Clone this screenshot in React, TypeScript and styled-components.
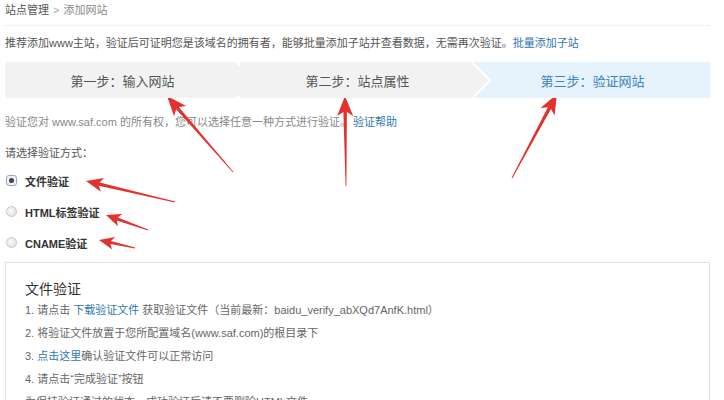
import styled, { createGlobalStyle } from 'styled-components';

const GlobalStyle = createGlobalStyle`
    html, body {
        margin: 0;
        padding: 0;
        background: #fff;
    }
    body {
        font-family: "Liberation Sans", "Noto Sans CJK SC", sans-serif;
        font-size: 11px;
        color: #666;
    }
`;

const Page = styled.div`
    position: relative;
    width: 724px;
    height: 400px;
    overflow: hidden;
    padding-left: 5px;
    box-sizing: border-box;
`;

const Inner = styled.div`
    width: 705px;
`;

const Breadcrumb = styled.div`
    line-height: 20px;
    height: 20px;
    padding-bottom: 5px;
    border-bottom: 1px dotted #e2e2e2;
    color: #555;
    font-size: 11px;
`;

const Sep = styled.span`
    color: #aaa;
    margin: 0 4px;
`;

const Faint = styled.span`
    color: #888;
`;

const Intro = styled.p`
    margin: 7px 0 0;
    line-height: 20px;
    color: #555;
    font-size: 11px;
`;

const Link = styled.a`
    color: #2f78b0;
    text-decoration: none;
    margin: 0 ${(p: { $gap?: number }) => p.$gap ?? 0}px;
`;

const Steps = styled.div`
    display: flex;
    height: 36px;
    margin-top: 9px;
`;

const Step = styled.div<{ $active?: boolean; $arrow?: boolean }>`
    position: relative;
    flex: 1;
    display: flex;
    align-items: center;
    justify-content: center;
    font-size: 13px;
    color: ${(p) => (p.$active ? '#3a86bd' : '#555')};
    background: ${(p) => (p.$active ? '#e6f2fc' : '#f2f2f2')};
    overflow: visible;
    z-index: ${(p) => (p.$arrow ? 2 : 1)};

    &::after {
        content: '';
        display: ${(p) => (p.$arrow ? 'block' : 'none')};
        position: absolute;
        right: -11px;
        top: 5px;
        width: 25px;
        height: 25px;
        background: #f2f2f2;
        border-top: 2px solid #fff;
        border-right: 2px solid #fff;
        transform: rotate(45deg);
    }
`;

const StepLabel = styled.span`
    position: relative;
    z-index: 3;
`;

const Notice = styled.p`
    margin: 14px 0 0;
    line-height: 20px;
    color: #888;
    font-size: 11px;
`;

const Prompt = styled.p`
    margin: 11px 0 0;
    line-height: 20px;
    color: #555;
    font-size: 11px;
`;

const Options = styled.div`
    margin-top: 2px;
    display: flex;
    flex-direction: column;
`;

const Option = styled.label`
    display: flex;
    align-items: center;
    height: 31px;
    gap: 8px;
    font-size: 11px;
    font-weight: bold;
    color: #333;
`;

const RadioMark = styled.span<{ $checked?: boolean }>`
    position: relative;
    width: 11px;
    height: 11px;
    margin-left: 1px;
    box-sizing: border-box;
    border-radius: ${(p) => (p.$checked ? '3px' : '50%')};
    border: 1px solid ${(p) => (p.$checked ? '#8fa6c8' : '#c8c8c8')};
    background: ${(p) => (p.$checked ? '#eef2f8' : 'radial-gradient(circle at 40% 40%, #fbfbfb, #dcdcdc)')};

    &::after {
        content: '';
        display: ${(p) => (p.$checked ? 'block' : 'none')};
        position: absolute;
        left: 2px;
        top: 2px;
        width: 5px;
        height: 5px;
        border-radius: 50%;
        background: #444;
    }
`;

const Panel = styled.div`
    margin-top: 4px;
    border: 1px solid #e2e2e2;
    box-shadow: 0 0 2px rgba(0, 0, 0, 0.06);
    padding: 16px 19px 20px;
    height: 200px;
`;

const PanelTitle = styled.h3`
    margin: 0;
    line-height: 20px;
    font-size: 14px;
    font-weight: normal;
    color: #333;
`;

const StepList = styled.ol`
    margin: 0;
    padding: 0;
    list-style: none;
`;

const StepItem = styled.li`
    line-height: 23px;
    font-size: 11px;
    color: #666;
`;

const Overlay = styled.svg`
    position: absolute;
    left: 0;
    top: 0;
    pointer-events: none;
`;

type Arrow = { x1: number; y1: number; x2: number; y2: number; head: number; hw: number; sw: number };

const arrows: Arrow[] = [
    { x1: 233, y1: 172, x2: 167, y2: 96, head: 20, hw: 8, sw: 3.5 },
    { x1: 346, y1: 186, x2: 345, y2: 96, head: 20, hw: 8, sw: 3.5 },
    { x1: 512, y1: 178, x2: 557, y2: 94, head: 20, hw: 8, sw: 3.5 },
    { x1: 175, y1: 202, x2: 86, y2: 181, head: 17, hw: 7, sw: 3.5 },
    { x1: 148, y1: 230, x2: 106, y2: 215, head: 15, hw: 6.5, sw: 3 },
    { x1: 135, y1: 248, x2: 99, y2: 240, head: 15, hw: 6.5, sw: 3 },
];

function arrowPoints(a: Arrow) {
    const dx = a.x2 - a.x1;
    const dy = a.y2 - a.y1;
    const len = Math.hypot(dx, dy);
    const ux = dx / len;
    const uy = dy / len;
    const nx = -uy;
    const ny = ux;
    const bx = a.x2 - ux * a.head;
    const by = a.y2 - uy * a.head;
    const nb = a.head * 0.2;
    const pts = [
        [a.x1 + nx * 0.4, a.y1 + ny * 0.4],
        [bx + ux * nb + nx * (a.sw / 2), by + uy * nb + ny * (a.sw / 2)],
        [bx + nx * a.hw, by + ny * a.hw],
        [a.x2, a.y2],
        [bx - nx * a.hw, by - ny * a.hw],
        [bx + ux * nb - nx * (a.sw / 2), by + uy * nb - ny * (a.sw / 2)],
        [a.x1 - nx * 0.4, a.y1 - ny * 0.4],
    ];
    return pts.map((p) => p.map((v) => v.toFixed(1)).join(',')).join(' ');
}

export default function App() {
    return (
        <>
            <GlobalStyle />
            <Page>
                <Inner>
                    <Breadcrumb>
                        站点管理<Sep>&gt;</Sep><Faint>添加网站</Faint>
                    </Breadcrumb>
                    <Intro>
                        推荐添加www主站，验证后可证明您是该域名的拥有者，能够批量添加子站并查看数据，无需再次验证。
                        <Link href="#">批量添加子站</Link>
                    </Intro>
                    <Steps>
                        <Step $arrow><StepLabel>第一步：输入网站</StepLabel></Step>
                        <Step $arrow><StepLabel>第二步：站点属性</StepLabel></Step>
                        <Step $active><StepLabel>第三步：验证网站</StepLabel></Step>
                    </Steps>
                    <Notice>
                        验证您对 www.saf.com 的所有权，您可以选择任意一种方式进行验证。
                        <Link href="#" $gap={2}>验证帮助</Link>
                    </Notice>
                    <Prompt>请选择验证方式：</Prompt>
                    <Options>
                        <Option><RadioMark $checked />文件验证</Option>
                        <Option><RadioMark />HTML标签验证</Option>
                        <Option><RadioMark />CNAME验证</Option>
                    </Options>
                    <Panel>
                        <PanelTitle>文件验证</PanelTitle>
                        <StepList>
                            <StepItem>
                                1. 请点击 <Link href="#">下载验证文件</Link> 获取验证文件（当前最新：baidu_verify_abXQd7AnfK.html）
                            </StepItem>
                            <StepItem>2. 将验证文件放置于您所配置域名(www.saf.com)的根目录下</StepItem>
                            <StepItem>
                                3. <Link href="#">点击这里</Link>确认验证文件可以正常访问
                            </StepItem>
                            <StepItem>4. 请点击“完成验证”按钮</StepItem>
                            <StepItem>为保持验证通过的状态，成功验证后请不要删除HTML文件</StepItem>
                        </StepList>
                    </Panel>
                </Inner>
                <Overlay width="724" height="400" viewBox="0 0 724 400">
                    {arrows.map((a, i) => (
                        <polygon key={i} points={arrowPoints(a)} fill="#e3312c" />
                    ))}
                </Overlay>
            </Page>
        </>
    );
}
